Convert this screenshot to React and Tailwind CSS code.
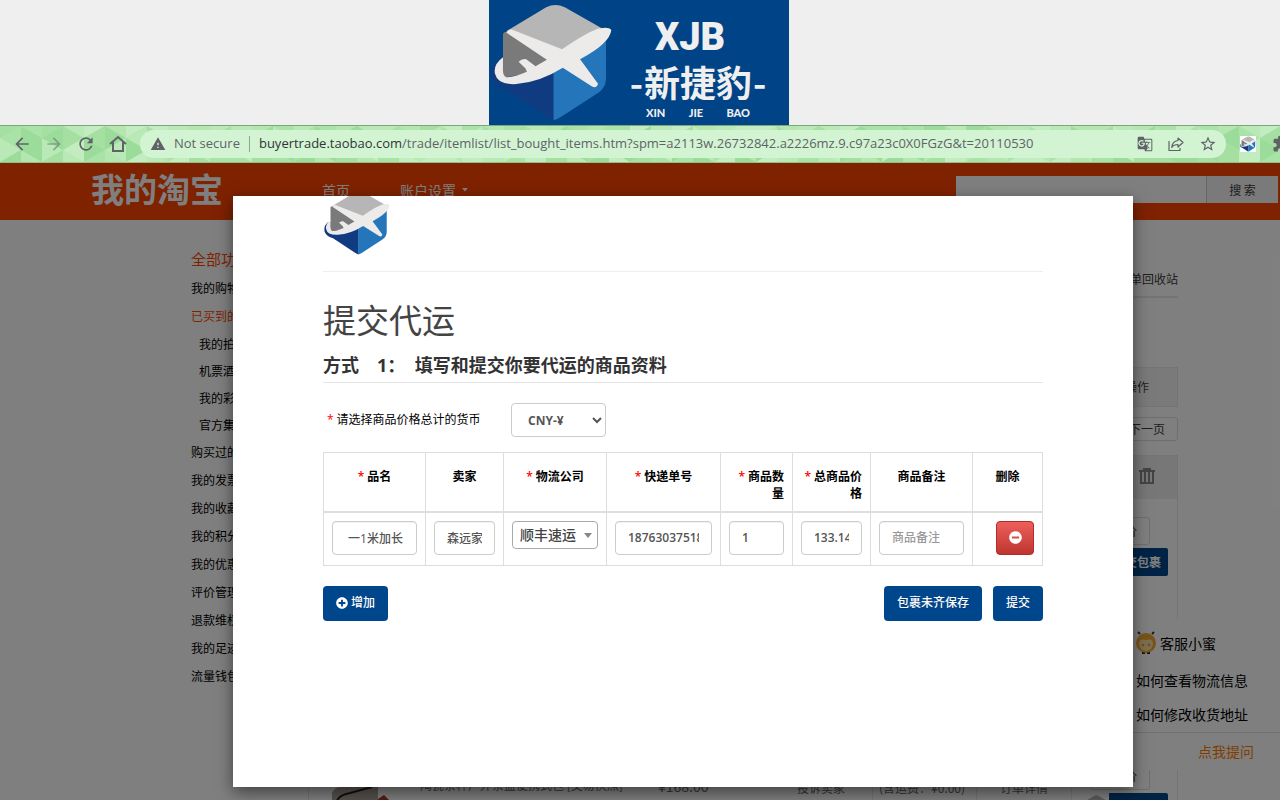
import React, { useState } from "react";
import {
  MdArrowBack,
  MdArrowForward,
  MdRefresh,
  MdWarning,
  MdGTranslate,
  MdStarBorder,
  MdExtension,
} from "react-icons/md";
import { FaPlusCircle, FaMinusCircle } from "react-icons/fa";

const SIDE_LINKS = [
  { text: "我的购物车" },
  { text: "已买到的宝贝", active: true },
  { text: "我的拍卖", sub: true },
  { text: "机票酒店", sub: true },
  { text: "我的彩票", sub: true },
  { text: "官方集运", sub: true },
  { text: "购买过的店铺" },
  { text: "我的发票" },
  { text: "我的收藏" },
  { text: "我的积分" },
  { text: "我的优惠" },
  { text: "评价管理" },
  { text: "退款维权" },
  { text: "我的足迹" },
  { text: "流量钱包" },
];

const CubeLogo = ({ className }) => (
  <svg viewBox="34 12 364 352" className={className} aria-hidden="true">
    <path d="M70 180 L224 196 L224 362 Q216 359 205 352 L84 272 Q50 266 38 238 Q30 206 52 186 Z" fill="#103b80" />
    <path d="M222 200 L302 170 L380 104 V236 Q380 262 358 278 L244 352 Q230 361 222 361 Z" fill="#2575bb" />
    <path d="M80 94 L200 22 Q228 8 256 22 L366 84 L250 160 Z" fill="#b6b6b6" />
    <path d="M70 102 Q74 94 84 96 L206 180 L140 222 L84 232 Q70 232 70 220 Z" fill="#7a7a7a" />
    <path
      d="M396 90 Q388 80 362 85 Q330 92 248 148 L100 90 Q86 86 80 98 L202 180 L168 199 L140 178 Q126 176 117 186 L138 206 L142 216 Q100 234 80 232 Q70 228 70 212 V172 Q40 194 46 222 Q54 256 110 253 Q180 248 250 204 L338 260 Q352 267 356 252 L302 178 Q392 130 396 90 Z"
      fill="#ecebea"
    />
  </svg>
);

// Low-poly theme behind the browser toolbar
const ThemePattern = () => {
  const shades = ["#a5e0a2", "#b4e6b0", "#9bdc9a", "#c3edc0", "#aae3a7", "#b9e9b6"];
  const triangles = [];
  for (let i = 0; i < 62; i++) {
    for (let j = 0; j < 3; j++) {
      const x = i * 21;
      const y = j * 24 - 12 + (i % 2) * 12;
      triangles.push(
        <path key={`${i}-${j}-a`} d={`M${x} ${y} l21 12 l-21 12 Z`} fill={shades[(i * 7 + j * 5 + ((i * i) % 11)) % 6]} />,
        <path key={`${i}-${j}-b`} d={`M${x + 21} ${y - 12} v24 l-21 -12 Z`} fill={shades[(i * 3 + j * 4 + ((i * i) % 7)) % 6]} />
      );
    }
  }
  return (
    <svg viewBox="0 0 1280 36" preserveAspectRatio="xMidYMid slice" className="absolute inset-0 h-full w-full" aria-hidden="true">
      <rect width="1280" height="36" fill="#a9e2a6" />
      {triangles}
    </svg>
  );
};

const Banner = () => (
  <header className="flex h-[125px] shrink-0 justify-center bg-[#efefef] pr-[2px]">
    <div className="flex w-[300px] bg-[#004386] pl-[2px] text-[#efefef]">
      <CubeLogo className="mt-1 h-[117px] w-[121px]" />
      <div className="ml-[14px] flex w-[144px] flex-col items-center pt-[17px]">
        <div className="pr-4 font-['Roboto',sans-serif] text-[38px] leading-[40px] font-black">XJB</div>
        <div className="flex items-center font-['Noto_Sans_CJK_SC',sans-serif] text-[36px] leading-[48px] font-bold">
          <span className="mr-px">-</span>新捷豹<span className="ml-px">-</span>
        </div>
        <div className="flex w-[104px] justify-between font-['Lato',sans-serif] text-[11px] leading-4 font-black">
          <span>XIN</span>
          <span>JIE</span>
          <span>BAO</span>
        </div>
      </div>
    </div>
  </header>
);

const Toolbar = () => (
  <nav className="relative flex h-[38px] shrink-0 items-center overflow-hidden border-t border-b border-t-[#7fa57f] border-b-[#8cc48a] text-[#5f6368]">
    <ThemePattern />
    <div className="relative flex w-full items-center">
      <div className="flex w-[140px] shrink-0 gap-3 pl-3">
        <button aria-label="Back"><MdArrowBack size={20} /></button>
        <button aria-label="Forward" className="opacity-50"><MdArrowForward size={20} /></button>
        <button aria-label="Reload"><MdRefresh size={20} /></button>
        <button aria-label="Home">
          <svg width="20" height="20" viewBox="0 0 20 20" fill="none" stroke="currentColor" strokeWidth="2">
            <path d="M2 10 L10 3 L18 10 M5 8 V17 H15 V8" />
          </svg>
        </button>
      </div>
      <div className="flex h-7 min-w-0 flex-1 items-center rounded-full bg-[#d3f4d3] pr-[9px] pl-[10px] font-['Open_Sans',sans-serif] text-[13px]">
        <MdWarning size={16} className="shrink-0" />
        <span className="ml-2 shrink-0 whitespace-nowrap">Not secure</span>
        <span className="mx-[9px] h-4 w-px shrink-0 bg-[#8fa491]" />
        <span className="min-w-0 flex-1 truncate">
          <span className="text-[#303438]">buyertrade.taobao.com</span>
          /trade/itemlist/list_bought_items.htm?spm=a2113w.26732842.a2226mz.9.c97a23c0X0FGzG&t=20110530
        </span>
        <div className="flex shrink-0 gap-[15px]">
          <button aria-label="Translate"><MdGTranslate size={16} /></button>
          <button aria-label="Share">
            <svg width="16" height="16" viewBox="0 0 16 16" fill="none" stroke="currentColor" strokeWidth="1.2">
              <path d="M1 5 V14.5 H12 V12" />
              <path d="M10 2 L15 6.5 L10 11 V8.5 C7 8.5 5 9.5 3.8 11.5 C4 7.5 6.5 5 10 4.5 Z" strokeLinejoin="round" />
            </svg>
          </button>
          <button aria-label="Bookmark"><MdStarBorder size={18} /></button>
        </div>
      </div>
      <button aria-label="XJB" className="ml-[14px] h-4 w-4 shrink-0 bg-white">
        <CubeLogo className="h-4 w-4" />
      </button>
      <div className="ml-4 w-2 shrink-0 overflow-hidden">
        <MdExtension size={18} />
      </div>
    </div>
  </nav>
);

const SiteHeader = () => (
  <div className="flex h-[57px] items-start bg-[#ff4400] pr-[2px] pl-[91px] text-white">
    <a href="#home" className="w-[231px] text-[33px] leading-[51px] font-bold">我的淘宝</a>
    <a href="#index" className="w-[78px] text-sm leading-[54px]">首页</a>
    <a href="#account" className="flex items-center gap-[6px] text-sm leading-[54px]">
      账户设置
      <svg width="6" height="4" viewBox="0 0 6 4" className="fill-white"><path d="M0 0 H6 L3 3.5 Z" /></svg>
    </a>
    <form className="mt-[13px] ml-auto flex h-[27px]">
      <input aria-label="搜索宝贝" className="w-[250px] bg-white" />
      <button type="button" className="w-[72px] border-l border-[#ccc] bg-[#f5f5f5] text-xs text-[#3c3c3c]">搜 索</button>
    </form>
  </div>
);

const OrderRow = () => (
  <div className="grid h-[245px] grid-cols-[111px_1fr_139px_76px_104px_95px_105px] text-xs text-[#6c6c6c]">
    <div className="pt-[41px] pl-[23px]">
      <svg width="60" height="60" viewBox="0 0 60 60">
        <path d="M0 8 Q2 2 14 0 H46 V60 H0 Z" fill="#aaa39b" />
        <path d="M4 60 V18 Q6 10 18 8 L40 2" fill="none" stroke="#222" strokeWidth="2" />
        <path d="M46 14 L52 10 L58 16 V60 H46 Z" fill="#a8392d" />
      </svg>
    </div>
    <p className="truncate pt-[33px]">陶瓷茶杯户外茶盘便携式包 [交易快照]</p>
    <p className="pt-[32px] text-sm">¥168.00</p>
    <p className="border-r border-[#e8e8e8] pt-[36px]">投诉卖家</p>
    <p className="border-r border-[#e8e8e8] pt-[36px] pl-[6px]">(含运费：¥0.00)</p>
    <p className="border-r border-[#e8e8e8] pt-[36px] text-center">订单详情</p>
    <div className="flex flex-col items-end gap-[3px] pt-[18px] pr-[9px]">
      <button className="mr-[18px] h-7 w-[60px] shrink-0 rounded-[3px] border border-[#dcdcdc] pr-3 text-right text-[#3c3c3c]">
        评价
      </button>
      <button className="flex h-7 w-[86px] shrink-0 items-center rounded-[2px] bg-[#00468c] font-bold text-white">
        <span className="flex h-7 w-[27px] shrink-0 items-center bg-white"><CubeLogo className="h-6 w-[27px]" /></span>
        <span className="pl-1">提交包裹</span>
      </button>
    </div>
  </div>
);

const TaobaoPage = () => (
  <div className="absolute inset-0 overflow-hidden bg-white font-['Noto_Sans_CJK_SC',sans-serif]">
    <SiteHeader />
    <div className="flex">
      <aside className="w-[308px] shrink-0 pt-[25px] pl-[191px]">
        <h2 className="h-[30px] text-[15px] leading-[28px] text-[#f40]">全部功能</h2>
        <ul className="text-xs text-black">
          {SIDE_LINKS.map((link) => (
            <li key={link.text} className={link.sub ? "h-[27px] pl-2 leading-[25px]" : "h-7 leading-[26px]"}>
              <a href="#list" className={link.active ? "text-[#f40]" : ""}>{link.text}</a>
            </li>
          ))}
        </ul>
      </aside>
      <section className="mr-[102px] min-w-0 flex-1 text-xs text-[#3c3c3c]">
        <div className="flex h-[78px] items-end justify-end border-b-2 border-[#e8e8e8] pb-[9px]">
          <a href="#recycle">订单回收站</a>
        </div>
        <div className="mt-[69px] flex h-10 items-center justify-end border border-[#e8e8e8] bg-[#f5f5f5] pr-7">操作</div>
        <div className="mt-[10px] flex justify-end">
          <button className="h-6 rounded-[3px] border border-[#dcdcdc] px-3">下一页</button>
        </div>
        <div className="mt-[14px] border border-[#e8e8e8]">
          <div className="flex h-[43px] items-center justify-end bg-[#efefef] pr-[22px] pb-1">
            <svg width="16" height="16" viewBox="0 0 16 16" fill="#888" aria-hidden="true">
              <path d="M4 0h8v2h4v2h-1v12H1V4H0V2h4z M3 4v10h2V4z M7 4v10h2V4z M11 4v10h2V4z" fillRule="evenodd" />
            </svg>
          </div>
          <OrderRow />
          <OrderRow />
        </div>
      </section>
    </div>

    {/* Customer service float */}
    <div className="absolute top-[456px] right-0 w-40 bg-white text-sm text-black">
      <div className="flex h-[47px] items-center gap-1 pl-4">
        <svg width="20" height="24" viewBox="0 0 20 24" aria-hidden="true">
          <path d="M2 1 L4 3 M18 1 L16 3" stroke="#433" strokeWidth="2" />
          <rect x="6" y="20" width="3" height="3" fill="#322" />
          <rect x="11" y="20" width="3" height="3" fill="#322" />
          <circle cx="10" cy="12" r="10" fill="#f0a930" />
          <path d="M3 13 Q3 7 10 9 Q17 7 17 13 Q16 20 10 20 Q4 20 3 13 Z" fill="#f9dca0" />
          <circle cx="7" cy="14" r="1.3" fill="#e89b20" />
          <circle cx="13" cy="14" r="1.3" fill="#e89b20" />
        </svg>
        客服小蜜
      </div>
      <a href="#track" className="block h-[34px] pl-4 leading-[28px]">如何查看物流信息</a>
      <a href="#address" className="block h-8 pl-4 leading-[28px]">如何修改收货地址</a>
      <div className="h-[38px] border-t border-[#e0e0e0] pr-[26px] text-right leading-[36px] text-[#ff7c00]">
        <a href="#ask">点我提问</a>
      </div>
    </div>
  </div>
);

const Required = () => <span className="mr-[3px] text-[#f00]">*</span>;

const inputClass =
  "block h-[34px] w-full rounded-[4px] border border-[#ccc] bg-white px-3 text-xs text-[#555] placeholder-[#999] inset-shadow-2xs";
const headClass = "border border-b-2 border-[#ddd] px-2 pt-[15px] pb-2 leading-[17px] font-semibold";
const cellClass = "border border-[#ddd] px-2 pt-2 pb-[10px] align-top";
const buttonClass = "h-[35px] rounded-[4px] bg-[#00468c] text-xs font-medium text-white text-shadow-2xs";

const SubmitModal = () => {
  const [item, setItem] = useState({
    name: " 一1米加长",
    seller: "森远家具",
    tracking: "18763037518",
    quantity: "1",
    price: "133.14",
    note: "",
  });

  const handleChange = (e) => {
    setItem({ ...item, [e.target.name]: e.target.value });
  };

  const field = (name, label) => (
    <input name={name} aria-label={label} value={item[name]} onChange={handleChange} className={`${inputClass} font-semibold`} />
  );

  // Chinese values read too heavy in semibold
  const textField = (name, label) => (
    <input name={name} aria-label={label} placeholder={label} value={item[name]} onChange={handleChange} className={`${inputClass} font-medium`} />
  );

  return (
    <div
      role="dialog"
      aria-label="提交代运"
      className="mt-[33px] mb-[13px] w-full max-w-[900px] overflow-hidden bg-white px-[90px] font-['Open_Sans','Noto_Sans_CJK_SC',sans-serif] text-xs text-black shadow-[0_5px_15px_rgba(0,0,0,0.5)]"
    >
      <div className="flex h-[76px] items-start overflow-hidden border-b border-[#eee]">
        <CubeLogo className="-mt-[5px] ml-px h-16 w-[66px]" />
      </div>
      <h1 className="mt-[25px] text-[33px] leading-[48px] font-normal text-[#444]">提交代运</h1>
      <h2 className="mt-2 border-b border-[#e5e5e5] pb-1 text-[18px] leading-[25px] font-bold whitespace-pre text-[#333]">
        {"方式\u30001：  填写和提交你要代运的商品资料"}
      </h2>

      <div className="mt-5 flex items-center">
        <label htmlFor="currency" className="w-[188px] pl-1"><Required />请选择商品价格总计的货币</label>
        <select id="currency" className="h-[34px] w-[95px] rounded-[4px] border border-[#ccc] bg-white px-3 text-xs font-bold text-[#555]">
          <option>CNY-¥</option>
          <option>USD-$</option>
        </select>
      </div>

      <table className="mt-[15px] w-full table-fixed border-collapse">
        <colgroup>
          <col className="w-[102px]" />
          <col className="w-[78px]" />
          <col className="w-[103px]" />
          <col className="w-[114px]" />
          <col className="w-[72px]" />
          <col className="w-[78px]" />
          <col className="w-[102px]" />
          <col />
        </colgroup>
        <thead>
          <tr className="h-[59px] align-top">
            <th className={`${headClass} text-center`}><Required />品名</th>
            <th className={`${headClass} text-center`}>卖家</th>
            <th className={`${headClass} text-center`}><Required />物流公司</th>
            <th className={`${headClass} text-center`}><Required />快递单号</th>
            <th className={`${headClass} text-right`}><Required />商品数量</th>
            <th className={`${headClass} text-right`}><Required />总商品价格</th>
            <th className={`${headClass} text-center`}>商品备注</th>
            <th className={`${headClass} text-center`}>删除</th>
          </tr>
        </thead>
        <tbody>
          <tr>
            <td className={cellClass}>{textField("name", "品名")}</td>
            <td className={cellClass}>{textField("seller", "卖家")}</td>
            <td className={cellClass}>
              <div className="relative">
                <select aria-label="物流公司" className="block h-7 w-full appearance-none rounded-[4px] border border-[#aaa] bg-white pl-[7px] text-sm leading-[24px] font-medium text-[#444]">
                  <option>顺丰速运</option>
                  <option>中通快递</option>
                </select>
                <svg width="8" height="5" viewBox="0 0 8 5" className="pointer-events-none absolute top-3 right-[6px] fill-[#888]">
                  <path d="M0 0 H8 L4 5 Z" />
                </svg>
              </div>
            </td>
            <td className={cellClass}>{field("tracking", "快递单号")}</td>
            <td className={cellClass}>{field("quantity", "商品数量")}</td>
            <td className={cellClass}>{field("price", "总商品价格")}</td>
            <td className={cellClass}>{textField("note", "商品备注")}</td>
            <td className={cellClass}>
              <button
                aria-label="删除"
                className="ml-auto flex h-[34px] w-[38px] items-center justify-center rounded-[4px] border border-[#b52b27] bg-linear-to-b from-[#ee5f5b] to-[#bd362f] text-white"
              >
                <FaMinusCircle size={13} />
              </button>
            </td>
          </tr>
        </tbody>
      </table>

      <div className="mt-5 flex">
        <button className={`${buttonClass} flex w-[65px] items-center justify-center gap-[3px]`}>
          <FaPlusCircle size={12} />增加
        </button>
        <button className={`${buttonClass} ml-auto w-[98px]`}>包裹未齐保存</button>
        <button className={`${buttonClass} ml-[11px] w-[50px]`}>提交</button>
      </div>
    </div>
  );
};

const App = () => (
  <div className="flex h-screen flex-col overflow-hidden">
    <Banner />
    <Toolbar />
    <main className="relative min-h-0 flex-1">
      <TaobaoPage />
      <div className="absolute inset-0 flex justify-center bg-black/50 pl-[86px]">
        <SubmitModal />
      </div>
    </main>
  </div>
);

export default App;
